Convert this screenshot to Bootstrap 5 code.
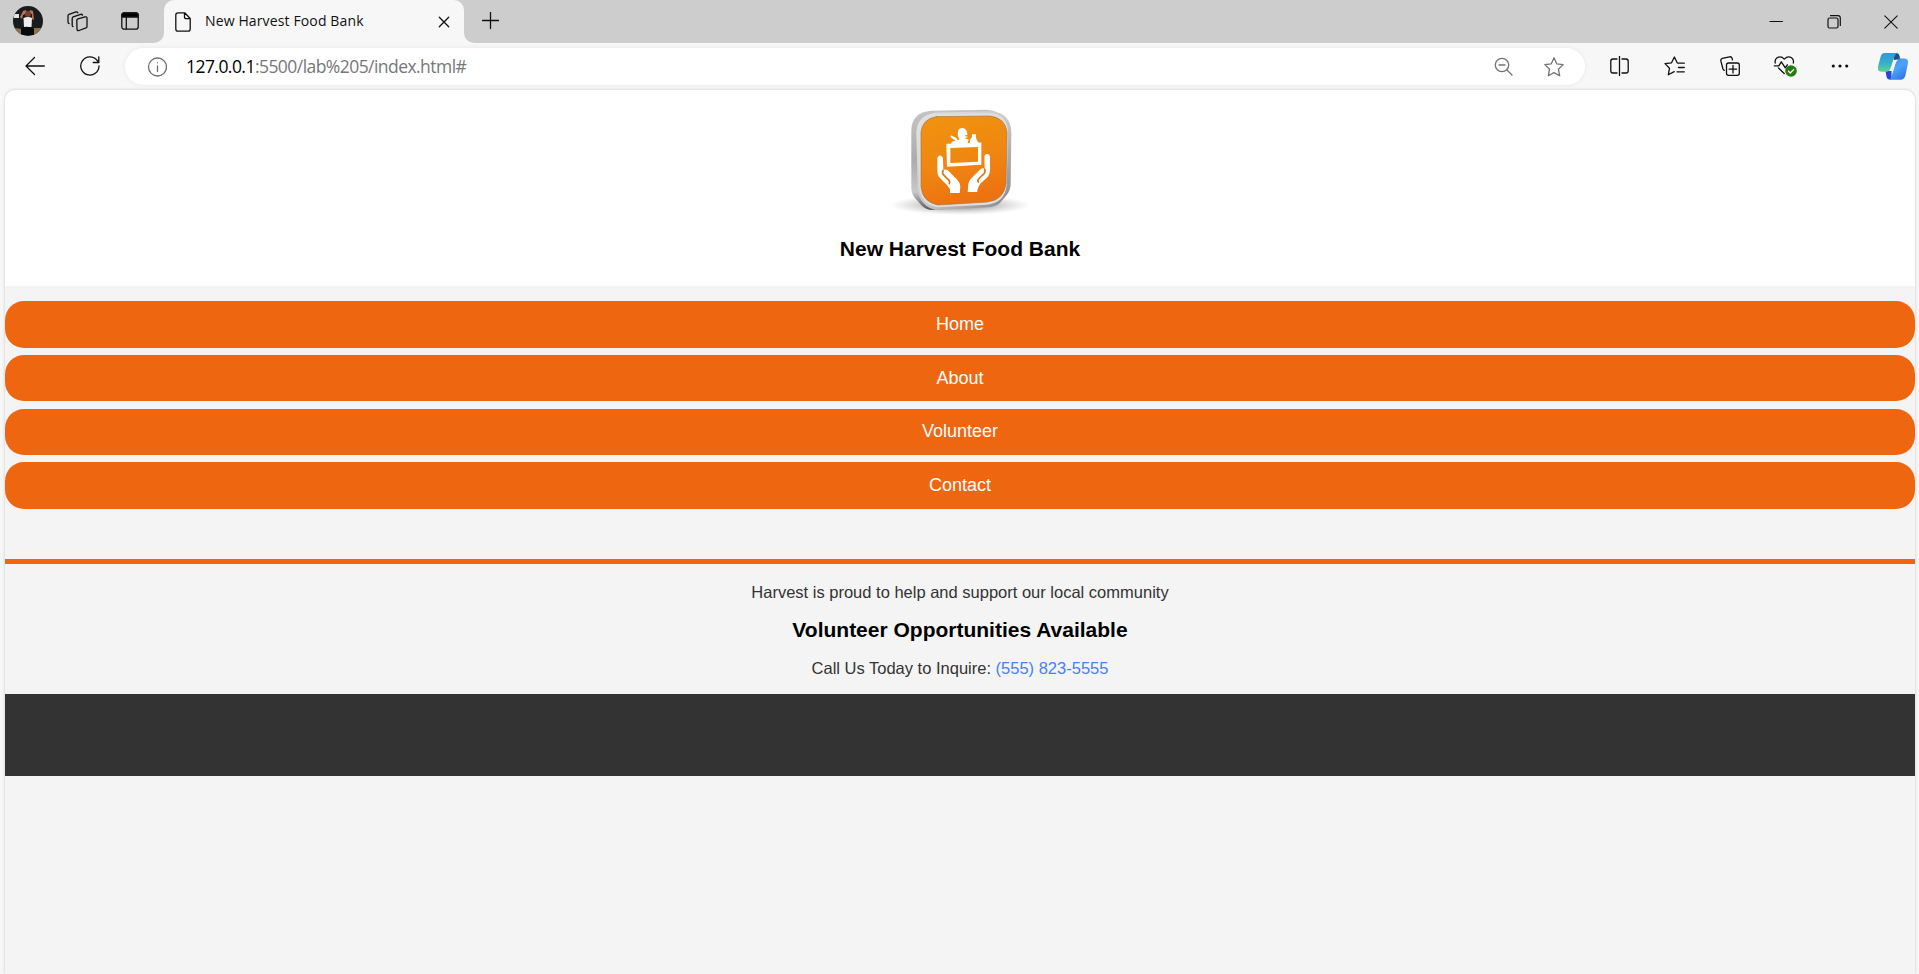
<!DOCTYPE html>
<html lang="en">
<head>
<meta charset="utf-8">
<title>New Harvest Food Bank</title>
<link href="https://cdn.jsdelivr.net/npm/bootstrap@5.3.0/dist/css/bootstrap.min.css" rel="stylesheet">
<style>
body{background:#f7f7f7;font-family:"Liberation Sans",Arial,sans-serif;color:#333;overflow:hidden;height:974px}
svg{display:block;flex:none;fill:none;stroke:#111;stroke-width:1.3;stroke-linecap:round;stroke-linejoin:round}
.ui-font{font-family:"Open Sans","Noto Sans",sans-serif;white-space:nowrap}
.tab-strip{height:43px;background:#cdcdcd}
.left-tools{width:164px;padding-left:13px;padding-bottom:1px;border-bottom-right-radius:10px;background:#cdcdcd}
.strip-right{background:#cdcdcd;border-bottom-left-radius:10px;padding-left:18px}
.strip-base{background:#f7f7f7}
.active-tab{width:300px;background:#f7f7f7;border-radius:10px 10px 0 0;padding:0 14px 0 11px}
.tab-corners{background:linear-gradient(#cdcdcd 50%,#f7f7f7 50%)}
.tab-title{font-size:14px;color:#111;margin-left:14px;letter-spacing:.13px;line-height:40px;padding-bottom:2px}
.win-tools{margin-right:-1px}
.win-cell{width:57.5px}
.tool-cell{width:55px}
.toolbar{height:46px}
.address{width:1460px;height:37px;margin-top:5px;border-radius:19px;box-shadow:0 0 4px #e6e6e6;padding-left:22px;padding-right:21px}
.url{font-size:17.5px;color:#777;line-height:35px;margin-left:19px;letter-spacing:-.55px}
.url b{font-weight:400;color:#000}
.viewport{margin:1px 4px 0 5px;height:884px;background:#f4f4f4;border-radius:10px 10px 0 0;box-shadow:0 0 3px #c4c4c4;overflow:hidden}
.site-head{height:196px}
.brand-mark{stroke:none}
.headline{font-size:21px;font-weight:700;line-height:24px;color:#000;margin:0}
.site-nav{padding-top:15px}
.nav-pill{height:47px;border-radius:19px;background:#ef6610;color:#fff;font-size:18px;line-height:46px;text-decoration:none;text-align:center;margin-bottom:7px}
.nav-pill:nth-child(2){height:46px;margin-bottom:8px}
.nav-pill:nth-child(3){height:46px;line-height:44px}
.nav-pill:last-child{margin-bottom:0}
.site-main{margin-top:50px;border-top:5px solid #ef6610;height:135px;padding-top:18px;font-size:16.5px;line-height:20px}
.phone{color:#4680ff;text-decoration:none}
.site-foot{height:82px;background:#333}
</style>
</head>
<body>
<header>
<div class="tab-strip d-flex">
 <div class="strip-base"><div class="left-tools d-flex align-items-center h-100">
  <svg width="30" height="30" viewBox="0 0 30 30"><defs><clipPath id="av"><circle cx="15" cy="15" r="15"/></clipPath></defs><g clip-path="url(#av)" style="stroke:none"><path fill="#181c1e" d="M0 0h30v30H0z"/><path fill="#dce4e8" d="M1 8h5v4H1z"/><path fill="#8b7352" d="M0 22l10 1v7H0zM21 22h9v8h-9z"/><path fill="#bd7153" d="M7 11l3-6 3-1 1 3-4 2-1 4zM17 4l3 1 1 9-2-1V8l-3-1z"/><circle cx="15" cy="8" r="3" fill="#77402f"/><path fill="#eee" d="M10.500 12q4.500-2 8.500 0l-.5 9h-7.500z"/><path fill="#080b0c" d="M8 22q7-3 13 1v6H8z"/></g></svg>
  <svg style="margin-left:24px" width="21" height="21" viewBox="0 0 21 21"><path d="M9.800 9.200q.2-1 1.200-1.400l7-1.900q2-.4 2 1.500v8q0 1-1 1.500l-7 2.600q-2 .5-2-1.500zM6 15.600q-.8-.3-.8-1.400V7.500q0-1.100 1-1.600l7.500-2.600q1.400-.3 1.800.9M2.100 12.600Q1 12.300 1 11V4.700q0-1 1-1.400L9 .9q1.400-.3 1.800.9"/></svg>
  <svg style="margin-left:33px" width="18" height="18" viewBox="0 0 18 18"><rect x=".8" y=".8" width="16.400" height="16.400" rx="2.500"/><path fill="#000" d="M1 5V3q0-2 2-2h12q2 0 2 2v2z"/><path d="M5.300 5v12"/></svg>
 </div></div>
 <div class="tab-corners"><div class="active-tab d-flex align-items-center h-100">
  <svg width="16" height="20" viewBox="0 0 16 20"><path d="M3 .8h6.700l5.500 5.700V17q0 2.200-2.200 2.200H3Q.8 19.200.8 17V3Q.8.800 3 .8zM9.500 1v4q0 1.700 1.700 1.700H15"/></svg>
  <span class="tab-title ui-font">New Harvest Food Bank</span>
  <svg class="ms-auto" width="12" height="12" viewBox="0 0 12 12"><path d="M1.300 1.300l9.400 9.400m0-9.400l-9.400 9.400"/></svg>
 </div></div>
 <div class="strip-base flex-grow-1"><div class="strip-right d-flex align-items-center h-100">
  <svg width="17" height="19" viewBox="0 0 17 19"><path d="M8.500.5v16M.5 8.500h16"/></svg>
  <div class="win-tools ms-auto d-flex">
   <div class="win-cell d-flex justify-content-center"><svg width="14" height="14" viewBox="0 0 14 14"><path d="M1 6.500h12.500" style="stroke-width:1"/></svg></div>
   <div class="win-cell d-flex justify-content-center"><svg width="14" height="14" viewBox="0 0 14 14"><rect x="1" y="3" width="10" height="10" rx="1.500" style="stroke-width:1.200"/><path d="M3.500.7H11q2.300 0 2.300 2.300v7.500" style="stroke-width:1.200"/></svg></div>
   <div class="win-cell d-flex justify-content-center"><svg width="14" height="14" viewBox="0 0 14 14"><path d="M.8.8l12.400 12.400m0-12.400L.8 13.200" style="stroke-width:1.100"/></svg></div>
  </div>
 </div></div>
</div>
<div class="toolbar d-flex">
 <div class="d-flex align-items-center" style="width:125px;padding-left:25px">
  <svg width="20" height="20" viewBox="0 0 20 20"><path d="M19.300 10H1m8.500-8.500L1 10l8.500 8.500"/></svg>
  <svg style="margin-left:35px" width="20" height="20" viewBox="0 0 20 20"><path d="M19 10a9.100 9.100 0 1 1-2-5.700L19 6.300M18.800 1v5.500h-5.600"/></svg>
 </div>
 <div class="address bg-white d-flex align-items-center">
  <svg width="20" height="20" viewBox="0 0 20 20" style="stroke:#6d6d6d"><circle cx="10.500" cy="10" r="9"/><path d="M10.500 9v5.500M10.500 5.700v.1"/></svg>
  <span class="url ui-font"><b>127.0.0.1</b>:5500/lab%205/index.html#</span>
  <div class="d-flex ms-auto" style="gap:31px">
  <svg width="19" height="20" viewBox="0 0 19 20" style="stroke:#737373"><circle cx="8" cy="8" r="6.700"/><path d="M5 8h6M13 13l5 5"/></svg>
  <svg width="20" height="20" viewBox="0 0 20 20" style="stroke:#737373"><path d="M10 .8l2.700 6 6.500.8-4.800 4.600 1.300 6.600L10 15.600l-5.700 3.200 1.300-6.600L.8 7.600l6.500-.8z"/></svg>
  </div>
 </div>
 <div class="d-flex align-items-center" style="margin-left:7px">
  <div class="tool-cell d-flex justify-content-center"><svg width="21" height="20" viewBox="0 0 21 20"><path d="M10.500 0v20M8 3H4Q1.800 3 1.800 5.200v9.600Q1.800 17 4 17h4M13 3h4q2.200 0 2.200 2.200v9.600Q19.200 17 17 17h-4"/></svg></div>
  <div class="tool-cell d-flex justify-content-center"><svg width="21" height="20" viewBox="0 0 21 20"><path d="M14 7.200h6.300M14.500 11.500h5.800M13 15.800h7.300M13.200 6.800L10.400 1 7.500 6.800 1 7.600l4.500 4.600-1.200 6.600 5.900-3.200"/></svg></div>
  <div class="tool-cell d-flex justify-content-center"><svg width="20" height="20" viewBox="0 0 20 20"><path d="M4.300 14.300q-1-.3-1.300-1.300L.9 5.200Q.4 3 2.300 2.400L9.500.8q2-.4 2.600 1.500l.4 1.600"/><rect x="6.500" y="7" width="12.800" height="12.300" rx="2"/><path d="M13 9.500v7.400M9.200 13.200h7.400"/></svg></div>
  <div class="tool-cell d-flex justify-content-center"><svg width="24" height="22" viewBox="0 0 24 22"><path d="M2.300 8Q1.500 5 3.800 3.100 7.500.3 11.300 4.100 15.100.3 18.800 3.100 21.100 5 20.300 8M5.500 13l5.700 5.500M1.300 10.800h4.500l2.500-4 4 6 2-3"/><circle cx="18" cy="16" r="5.800" fill="#267c10" style="stroke:none"/><path d="M15.500 16.200l1.800 1.800 3.300-3.400" style="stroke:#fff"/></svg></div>
  <div class="tool-cell d-flex justify-content-center"><svg width="18" height="6" viewBox="0 0 18 6"><g fill="#111" style="stroke:none"><circle cx="2.300" cy="3" r="1.600"/><circle cx="9" cy="3" r="1.600"/><circle cx="15.700" cy="3" r="1.600"/></g></svg></div>
  <div class="d-flex" style="margin-left:11px"><svg width="30" height="27" viewBox="0 0 30 27" style="stroke:none"><defs><linearGradient id="ca" x1="0" y1="0" x2="0" y2="1"><stop stop-color="#3597dc"/><stop offset=".5" stop-color="#35adca"/><stop offset="1" stop-color="#5fd391"/></linearGradient><linearGradient id="cb" x1="0" y1="0" x2=".6" y2="1"><stop stop-color="#3e7de6"/><stop offset=".5" stop-color="#4da6fa"/><stop offset="1" stop-color="#3478e8"/></linearGradient></defs><path fill="#204f7a" d="M13 0h5q3 0 3.500 3l.8 3-6 1z"/><path fill="#2447d4" d="M7.500 18l6-1v9.500h-2q-2.500 0-3-3z"/><path fill="url(#ca)" d="M6.500 0H19q-2 1-3 5l-3 9q-1.300 4.800-5 4.800H4q-5 0-4-5L2.500 4Q3.500 0 6.500 0z"/><path fill="url(#cb)" d="M21 5.500h5q5 0 3.800 5.200L27.500 22q-1 4.700-5 4.700H11q2-1 3-5l3.500-12q1.200-4.200 3.500-4.200z"/><path fill="#f7f7f7" d="M17 7h3q-1.800 1-2.500 3.500L15.200 18h-4.600q1.900-1 2.700-3.700l1.500-5Q15.500 7 17 7z"/></svg></div>
 </div>
</div>
</header>
<div class="viewport">
 <div class="site-head bg-white d-flex flex-column align-items-center">
  <svg class="brand-mark" width="180" height="147" viewBox="0 0 540 441">
   <defs>
    <linearGradient id="rim" x1="0" y1="0" x2="1" y2="1"><stop stop-color="#e6e6e6"/><stop offset=".5" stop-color="#c9c9c9"/><stop offset="1" stop-color="#858585"/></linearGradient>
    <linearGradient id="side" x1="0" y1="0" x2="0" y2="1"><stop stop-color="#c5c5c5"/><stop offset=".5" stop-color="#ababab"/><stop offset=".82" stop-color="#c8c8c8"/><stop offset="1" stop-color="#555"/></linearGradient>
    <linearGradient id="face" x1="0" y1="0" x2=".25" y2="1"><stop stop-color="#f0930f"/><stop offset=".6" stop-color="#ef8611"/><stop offset="1" stop-color="#ed7311"/></linearGradient>
    <radialGradient id="shade"><stop stop-color="#444" stop-opacity=".75"/><stop offset=".6" stop-color="#777" stop-opacity=".3"/><stop offset="1" stop-color="#999" stop-opacity="0"/></radialGradient>
   </defs>
   <g transform="translate(0 2)">
   <ellipse cx="270" cy="343" rx="212" ry="30" fill="url(#shade)"/>
   <path fill="url(#side)" d="M184 60L348 57Q366 57 381 65L230 355 184 358Q166 356 153 342L134 321Q124 309 124 290V118Q125 65 184 60z"/>
   <path fill="url(#rim)" d="M196 66L361 62Q423 65 424 128L422 280Q422 300 408 316L389 338Q375 349 354 350L198 358Q150 349 143 296L139 124Q142 74 196 66z"/>
   <path fill="#dedede" d="M198 70L360 67Q410 70 414 120L410 284Q405 337 350 342L203 350Q151 341 148 290V125Q149 78 198 70z"/>
   <path fill="url(#face)" style="stroke:#a8763f;stroke-width:2" d="M199 78L359 76Q405 81 411 124L408 278Q402 329 351 334L204 343Q157 334 153 288V125Q157 85 199 78z"/>
   <g fill="#fff">
    <path fill-rule="evenodd" d="M229 159H243Q244 150 257 150L242 140Q239 132 248 136L259 142 263 149 269 146Q261 135 264 123 266 111 277 112 290 114 291 126L293 132 283 135 295 139 284 142 296 147 292 158 299 157 301 145 306 140V131H318V142L324 155 334 156V222L231 228zM241 172V217L324 213V169z"/>
    <path d="M202 203Q204 193 213 195 220 198 219 208L220 237Q231 234 238 243L254 260Q270 273 271 288L269 307H240V296Q232 282 215 267 202 256 202 242z"/>
    <path d="M343 200Q344 189 353 190 361 192 360 203L360 238Q359 254 349 263L333 277Q322 290 322 304H293L295 280Q298 267 313 254L329 238Q335 231 344 234z"/>
   </g>
   <path d="M220 239q-6 8 2 15l13 13q6 7 3 12m106-44q4 9-4 16l-12 11q-7 7-3 12" style="stroke:#d97812;stroke-width:5"/>
   </g>
  </svg>
  <h1 class="headline">New Harvest Food Bank</h1>
 </div>
 <nav class="site-nav d-flex flex-column">
  <a class="nav-pill" href="#">Home</a><a class="nav-pill" href="#">About</a><a class="nav-pill" href="#">Volunteer</a><a class="nav-pill" href="#">Contact</a>
 </nav>
 <main class="site-main text-center">
  <p class="mb-0">Harvest is proud to help and support our local community</p>
  <h2 class="headline" style="margin:16px 0 16px">Volunteer Opportunities Available</h2>
  <p class="mb-0">Call Us Today to Inquire: <a class="phone" href="#">(555) 823-5555</a></p>
 </main>
 <footer class="site-foot"></footer>
</div>
<script src="https://cdn.jsdelivr.net/npm/bootstrap@5.3.0/dist/js/bootstrap.bundle.min.js"></script>
</body>
</html>
